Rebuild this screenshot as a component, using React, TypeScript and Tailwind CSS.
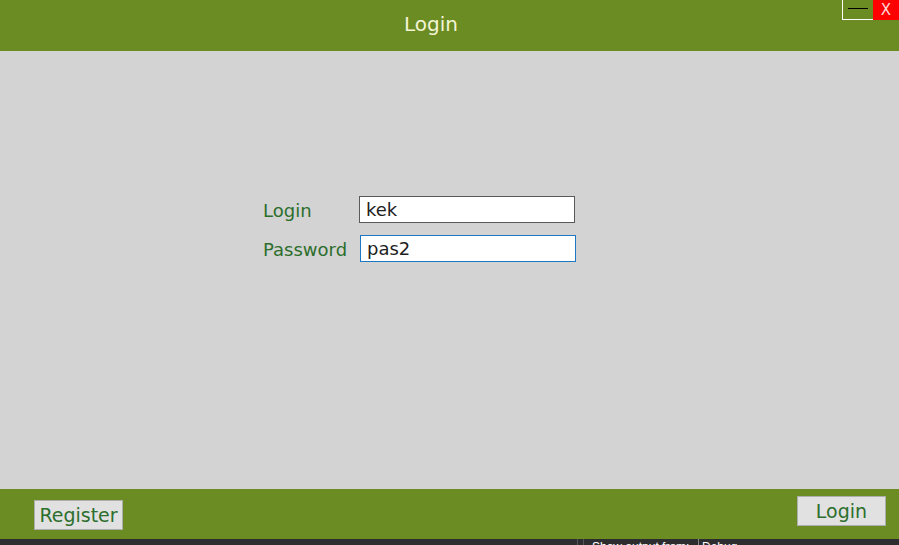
import React, { useState } from 'react';

const App: React.FC = () => {
  const [login, setLogin] = useState('kek');
  const [password, setPassword] = useState('pas2');

  return (
    <div
      className="w-[899px] h-[545px] flex flex-col bg-[#d3d3d3] overflow-hidden"
      style={{ fontFamily: '"DejaVu Sans", sans-serif' }}
    >
      {/* Title bar */}
      <div className="relative h-[51px] shrink-0 bg-[#6b8b23] flex items-center justify-center pr-[37px]">
        <span className="text-[20px] text-[#f3f5d6] pb-[4px]">Login</span>
        <div className="absolute top-0 right-0 flex">
          <button className="w-[31px] h-[20px] border-l border-b border-white bg-[#6b8b23] flex items-center justify-center">
            <span className="block w-[20px] h-[1px] bg-black mb-[2px]" />
          </button>
          <button className="w-[26px] h-[20px] bg-[#ff0000] text-[#ffd6d6] text-[15px] leading-[20px] flex items-center justify-center">
            X
          </button>
        </div>
      </div>

      {/* Form */}
      <div className="flex-1 flex flex-col pt-[145px] pl-[263px]">
        <div className="flex items-center h-[27px]">
          <label className="w-[96px] text-[18px] text-[#2c6e2c] pt-[2px]">Login</label>
          <input
            value={login}
            onChange={(e) => setLogin(e.target.value)}
            className="w-[216px] h-[27px] bg-white border border-[#5a5a5a] px-[6px] text-[18px] text-[#1e1e1e] outline-none"
          />
        </div>
        <div className="flex items-center h-[27px] mt-[12px]">
          <label className="w-[97px] text-[18px] text-[#2c6e2c] pt-[2px]">Password</label>
          <input
            value={password}
            onChange={(e) => setPassword(e.target.value)}
            className="w-[216px] h-[27px] bg-white border border-[#1d78c1] px-[6px] text-[18px] text-[#1e1e1e] outline-none"
          />
        </div>
      </div>

      {/* Footer */}
      <div className="h-[50px] shrink-0 bg-[#6b8b23] flex justify-between px-[13px]">
        <button className="mt-[11px] ml-[21px] w-[89px] h-[30px] bg-[#e1e1e1] border border-[#adadad] text-[19px] text-[#2c6e2c] leading-none">
          Register
        </button>
        <button className="mt-[7px] w-[89px] h-[30px] bg-[#e1e1e1] border border-[#adadad] text-[19px] text-[#2c6e2c] leading-none">
          Login
        </button>
      </div>

      {/* Output strip (cut off) */}
      <div className="h-[6px] shrink-0 bg-[#2d2d30] relative overflow-hidden">
        <div className="absolute left-[577px] top-0 h-full w-[1px] bg-[#555]" />
        <div className="absolute left-[583px] top-0 h-full w-[1px] bg-[#555]" />
        <span
          className="absolute left-[592px] top-[1px] text-[12px] leading-[14px] text-white whitespace-nowrap"
          style={{ fontFamily: '"Liberation Sans", sans-serif' }}
        >
          Show output from:
        </span>
        <div className="absolute left-[698px] top-0 h-full w-[1px] bg-[#888]" />
        <span
          className="absolute left-[702px] top-[1px] text-[12px] leading-[14px] text-white whitespace-nowrap"
          style={{ fontFamily: '"Liberation Sans", sans-serif' }}
        >
          Debug
        </span>
      </div>
    </div>
  );
};

export default App;
